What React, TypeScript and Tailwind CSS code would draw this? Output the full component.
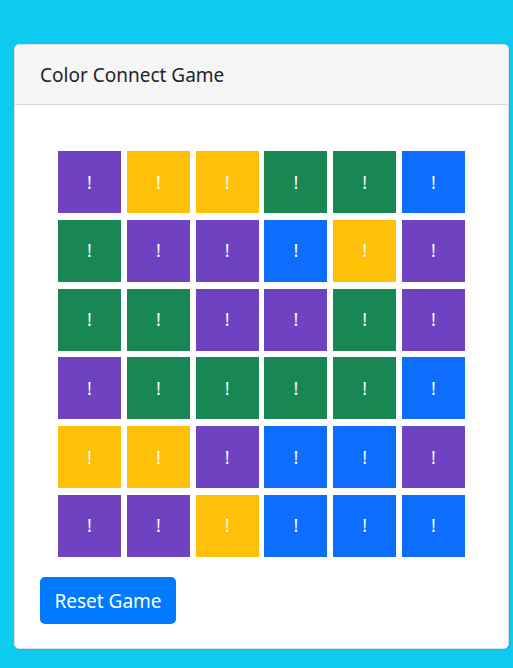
import React from "react";

const P = "bg-[#6f42c1]";
const Y = "bg-[#ffc107]";
const G = "bg-[#198754]";
const B = "bg-[#0d6efd]";

const grid = [
  [P, Y, Y, G, G, B],
  [G, P, P, B, Y, P],
  [G, G, P, P, G, P],
  [P, G, G, G, G, B],
  [Y, Y, P, B, B, P],
  [P, P, Y, B, B, B],
];

export default function App() {
  return (
    <div className="min-h-screen bg-[#0dcaf0] pt-[44px] pl-[14px] pb-[19px]" style={{ fontFamily: '"Noto Sans", "Open Sans", sans-serif' }}>
      <div className="w-[495px] rounded-[5px] border border-[#dcdcdc] bg-white overflow-hidden shadow-[1px_1px_1px_rgba(0,0,0,0.08)]">
        <div className="h-[60px] bg-[#f6f6f6] border-b border-[#d9d9d9] flex items-center pl-[25px] pt-[2px] text-[19px] text-[#212529]">
          Color Connect Game
        </div>
        <div className="px-[25px] pt-[46px] pb-[24px]">
          <div className="grid grid-cols-[repeat(6,63px)] gap-x-[5.8px] gap-y-[6.8px] justify-center">
            {grid.flat().map((c, i) => (
              <div key={i} className={`${c} h-[62px] flex items-center justify-center text-white text-[18px]`}>
                !
              </div>
            ))}
          </div>
          <button className="mt-[20px] h-[47px] w-[136px] rounded-[5px] bg-[#007bff] text-white text-[19px] pt-[1px]">
            Reset Game
          </button>
        </div>
      </div>
    </div>
  );
}
